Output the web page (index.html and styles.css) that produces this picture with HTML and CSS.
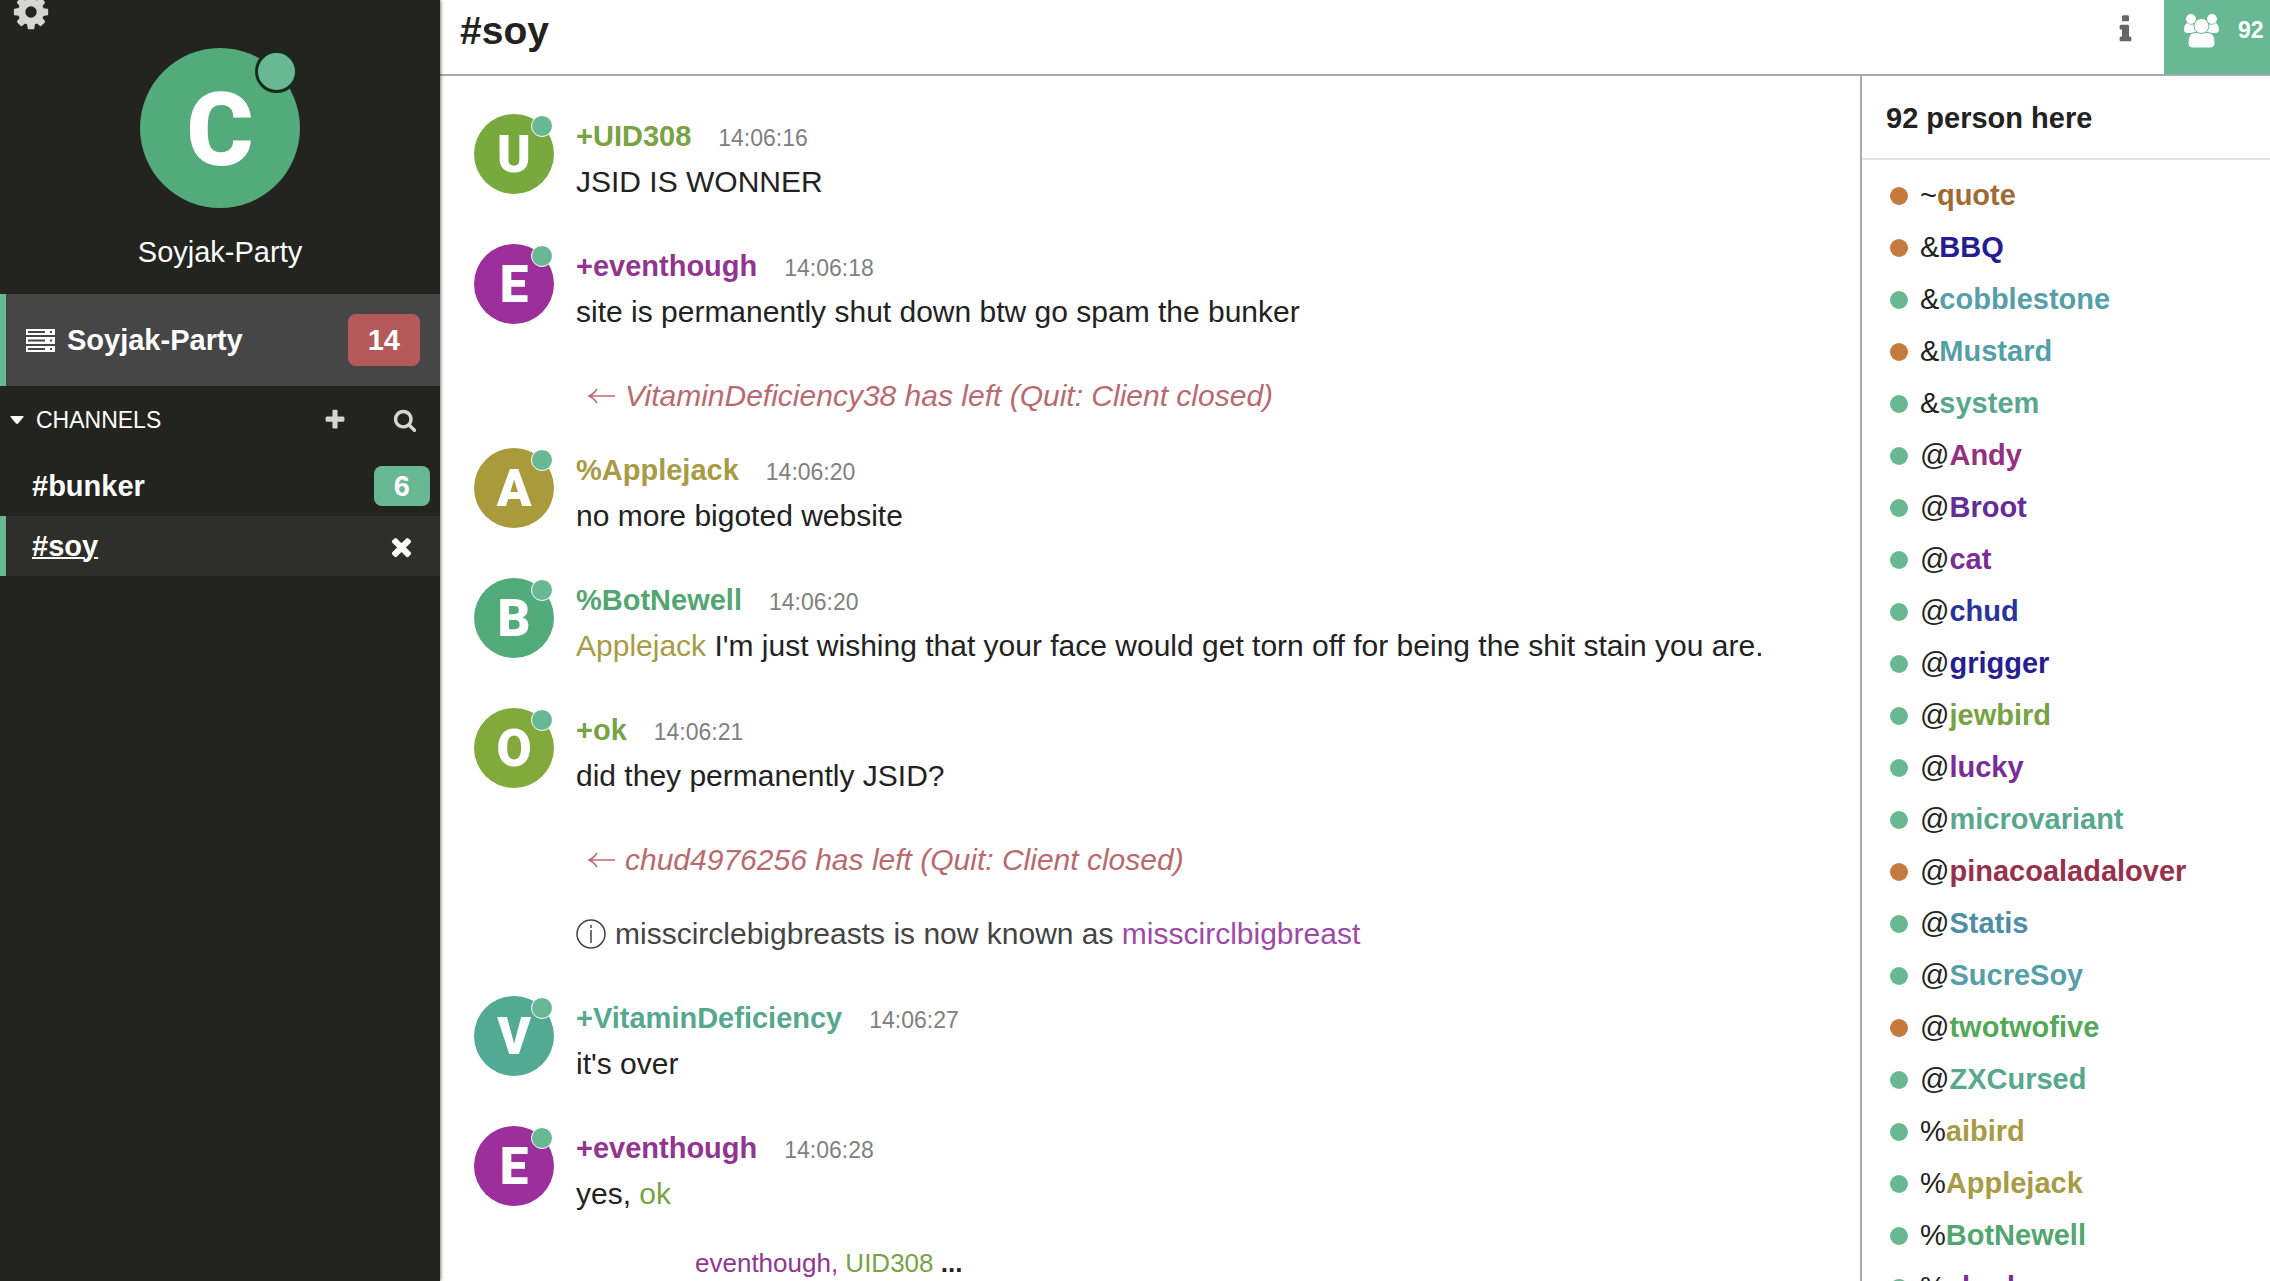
FILE: index.html
```html
<!DOCTYPE html>
<html lang="en">
<head>
	<meta charset="UTF-8">
	<meta name="viewport" content="width=device-width, initial-scale=1">
	<title>#soy - Soyjak-Party</title>
	<link rel="stylesheet" href="styles.css">
</head>
<body>
	<div class="app">
		<nav class="sidebar">
			<button class="settings" aria-label="Settings">
				<svg class="icon-cog" viewBox="0 0 1792 1792"><path d="M1152 896q0-106-75-181t-181-75-181 75-75 181 75 181 181 75 181-75 75-181zm512-109v222q0 12-8 23t-20 13l-185 28q-19 54-39 91 35 50 107 138 10 12 10 25t-9 23q-27 37-99 108t-94 71q-12 0-26-9l-138-108q-44 23-91 38-16 136-29 186-7 28-36 28h-222q-14 0-24.5-8.5t-11.5-21.5l-28-184q-49-16-90-37l-141 107q-10 9-25 9-14 0-25-11-126-114-165-168-7-10-7-23 0-12 8-23 15-21 51-66.5t54-70.5q-27-50-41-99l-183-27q-13-2-21-12.5t-8-23.5v-222q0-12 8-23t19-13l186-28q14-46 39-92-40-57-107-138-10-12-10-24 0-10 9-23 26-36 98.5-107.5t94.5-71.5q13 0 26 10l138 107q44-23 91-38 16-136 29-186 7-28 36-28h222q14 0 24.5 8.5t11.5 21.5l28 184q49 16 90 37l142-107q9-9 24-9 13 0 25 10 129 119 165 170 7 8 7 22 0 12-8 23-15 21-51 66.5t-54 70.5q26 50 41 98l183 28q13 2 21 12.5t8 23.5z"/></svg>
			</button>
			<div class="profile">
				<div class="avatar avatar-large c-green">C<span class="status"></span></div>
				<span class="profile-name">Soyjak-Party</span>
			</div>

			<div class="network">
				<svg class="icon-server" viewBox="0 0 29 23"><path fill-rule="evenodd" d="M0 0h29v6H0zM2 2v2h17V2zM24 2v2h2V2zM0 8h29v7H0zM2 10.500v2h17v-2zM24 10.500v2h2v-2zM0 17h29v6H0zM2 19v2h17v-2zM24 19v2h2v-2z"/></svg>
				<a class="network-name" href="#">Soyjak-Party</a>
				<span class="badge badge-red">14</span>
			</div>

			<div class="channels-head">
				<svg class="icon-caret" viewBox="0 0 14 8"><path d="M1 0h12q1 0 .5 1L8 7.500q-1 .8-2 0L.5 1Q0 0 1 0z"/></svg>
				<span class="channels-title">CHANNELS</span>
				<button class="head-btn" aria-label="Join channel">
					<svg class="icon-small" viewBox="0 0 1792 1792"><path d="M1600 736v192q0 40-28 68t-68 28h-416v416q0 40-28 68t-68 28h-192q-40 0-68-28t-28-68v-416h-416q-40 0-68-28t-28-68v-192q0-40 28-68t68-28h416v-416q0-40 28-68t68-28h192q40 0 68 28t28 68v416h416q40 0 68 28t28 68z"/></svg>
				</button>
				<button class="head-btn" aria-label="Search channels">
					<svg class="icon-small" viewBox="0 0 1792 1792"><path d="M1216 832q0-185-131.5-316.5t-316.5-131.5-316.5 131.5-131.5 316.5 131.5 316.5 316.5 131.5 316.5-131.5 131.5-316.5zm512 832q0 52-38 90t-90 38q-54 0-90-38l-343-342q-179 124-399 124-143 0-273.5-55.5t-225-150-150-225-55.5-273.5 55.5-273.5 150-225 225-150 273.5-55.5 273.5 55.5 225 150 150 225 55.500 273.5q0 220-124 399l343 343q37 37 37 90z"/></svg>
				</button>
			</div>
			<ul class="channels">
				<li class="channel">
					<a href="#">#bunker</a>
					<span class="badge">6</span>
				</li>
				<li class="channel active">
					<a href="#">#soy</a>
					<button class="channel-close" aria-label="Leave channel">
						<svg class="icon-close" viewBox="0 0 1792 1792"><path d="M1490 1322q0 40-28 68l-136 136q-28 28-68 28t-68-28l-294-294-294 294q-28 28-68 28t-68-28l-136-136q-28-28-28-68t28-68l294-294-294-294q-28-28-28-68t28-68l136-136q28-28 68-28t68 28l294 294 294-294q28-28 68-28t68 28l136 136q28 28 28 68t-28 68l-294 294 294 294q28 28 28 68z"/></svg>
					</button>
				</li>
			</ul>
		</nav>

		<div class="container">
			<header class="header">
				<h1 class="header-name">#soy</h1>
				<button class="header-info" aria-label="Channel info">
					<svg class="icon-info" viewBox="0 0 1792 1792"><path d="M1216 1344v128q0 26-19 45t-45 19h-512q-26 0-45-19t-19-45v-128q0-26 19-45t45-19h64v-384h-64q-26 0-45-19t-19-45v-128q0-26 19-45t45-19h384q26 0 45 19t19 45v576h64q26 0 45 19t19 45zm-128-1152v192q0 26-19 45t-45 19h-256q-26 0-45-19t-19-45v-192q0-26 19-45t45-19h256q26 0 45 19t19 45z"/></svg>
				</button>
				<button class="header-users" aria-label="92 users">
					<svg class="icon-users" viewBox="0 0 36 34">
						<circle cx="7" cy="5" r="5"/><circle cx="28" cy="5" r="5"/>
						<path d="M3 9q4 3 8 1-1 6 3 9H4q-4 0-4-3 0-5 3-7zM32 9q-4 3-8 1 1 6-3 9h10q4 0 4-3 0-5-3-7z"/>
						<path class="front" d="M11 18.500h13q7 0 7 10 0 5.500-5 5.500H9.500q-5.500 0-5.500-5.500 0-10 7-10z"/>
						<circle class="front" cx="17.500" cy="12" r="7.500"/>
					</svg>
					<span>92</span>
				</button>
			</header>

			<div class="content">
				<main class="messages">
					<div class="message">
						<div class="avatar c-lime">U<span class="status"></span></div>
						<div class="message-body">
							<div class="message-head"><a class="nick t-lime" href="#">+UID308</a><time>14:06:16</time></div>
							<p>JSID IS WONNER</p>
						</div>
					</div>
					<div class="message">
						<div class="avatar c-purple">E<span class="status"></span></div>
						<div class="message-body">
							<div class="message-head"><a class="nick t-purple" href="#">+eventhough</a><time>14:06:18</time></div>
							<p>site is permanently shut down btw go spam the bunker</p>
						</div>
					</div>
					<p class="notice quit"><svg class="icon-arrow" viewBox="0 0 28 16"><path d="M27 8H2M9 1Q6 6 1 8q5 2 8 7"/></svg>VitaminDeficiency38 has left (Quit: Client closed)</p>
					<div class="message">
						<div class="avatar c-olive">A<span class="status"></span></div>
						<div class="message-body">
							<div class="message-head"><a class="nick t-olive" href="#">%Applejack</a><time>14:06:20</time></div>
							<p>no more bigoted website</p>
						</div>
					</div>
					<div class="message">
						<div class="avatar c-green">B<span class="status"></span></div>
						<div class="message-body">
							<div class="message-head"><a class="nick t-green" href="#">%BotNewell</a><time>14:06:20</time></div>
							<p><a class="t-olive" href="#">Applejack</a> I'm just wishing that your face would get torn off for being the shit stain you are.</p>
						</div>
					</div>
					<div class="message">
						<div class="avatar c-lime2">O<span class="status"></span></div>
						<div class="message-body">
							<div class="message-head"><a class="nick t-lime" href="#">+ok</a><time>14:06:21</time></div>
							<p>did they permanently JSID?</p>
						</div>
					</div>
					<p class="notice quit"><svg class="icon-arrow" viewBox="0 0 28 16"><path d="M27 8H2M9 1Q6 6 1 8q5 2 8 7"/></svg>chud4976256 has left (Quit: Client closed)</p>
					<p class="notice rename"><svg class="icon-circle-i" viewBox="0 0 30 30"><circle cx="15" cy="15" r="14"/><path d="M15 11v13M15 6v3"/></svg>misscirclebigbreasts is now known as <a class="t-violet" href="#">misscirclbigbreast</a></p>
					<div class="message">
						<div class="avatar c-teal">V<span class="status"></span></div>
						<div class="message-body">
							<div class="message-head"><a class="nick t-teal" href="#">+VitaminDeficiency</a><time>14:06:27</time></div>
							<p>it's over</p>
						</div>
					</div>
					<div class="message message-last">
						<div class="avatar c-purple">E<span class="status"></span></div>
						<div class="message-body">
							<div class="message-head"><a class="nick t-purple" href="#">+eventhough</a><time>14:06:28</time></div>
							<p>yes, <a class="t-lime" href="#">ok</a></p>
						</div>
					</div>
					<p class="typing"><span class="t-purple">eventhough, </span><span class="t-lime">UID308</span> <b>...</b></p>
				</main>

				<aside class="nicklist">
					<h2 class="nicklist-head">92 person here</h2>
					<ul class="users">
						<li class="user away"><span>~<a class="t-brown" href="#">quote</a></span></li>
						<li class="user away"><span>&amp;<a class="t-navy" href="#">BBQ</a></span></li>
						<li class="user"><span>&amp;<a class="t-cyan" href="#">cobblestone</a></span></li>
						<li class="user away"><span>&amp;<a class="t-cyan" href="#">Mustard</a></span></li>
						<li class="user"><span>&amp;<a class="t-teal" href="#">system</a></span></li>
						<li class="user"><span>@<a class="t-magenta" href="#">Andy</a></span></li>
						<li class="user"><span>@<a class="t-indigo" href="#">Broot</a></span></li>
						<li class="user"><span>@<a class="t-grape" href="#">cat</a></span></li>
						<li class="user"><span>@<a class="t-blue" href="#">chud</a></span></li>
						<li class="user"><span>@<a class="t-navy" href="#">grigger</a></span></li>
						<li class="user"><span>@<a class="t-lime" href="#">jewbird</a></span></li>
						<li class="user"><span>@<a class="t-grape" href="#">lucky</a></span></li>
						<li class="user"><span>@<a class="t-teal" href="#">microvariant</a></span></li>
						<li class="user away"><span>@<a class="t-crimson" href="#">pinacoaladalover</a></span></li>
						<li class="user"><span>@<a class="t-steel" href="#">Statis</a></span></li>
						<li class="user"><span>@<a class="t-cyan" href="#">SucreSoy</a></span></li>
						<li class="user away"><span>@<a class="t-leaf" href="#">twotwofive</a></span></li>
						<li class="user"><span>@<a class="t-teal" href="#">ZXCursed</a></span></li>
						<li class="user"><span>%<a class="t-olive" href="#">aibird</a></span></li>
						<li class="user"><span>%<a class="t-olive" href="#">Applejack</a></span></li>
						<li class="user"><span>%<a class="t-green" href="#">BotNewell</a></span></li>
						<li class="user"><span>%<a class="t-grape" href="#">chuds</a></span></li>
					</ul>
				</aside>
			</div>
		</div>
	</div>
</body>
</html>
```
FILE: styles.css
```css
*{box-sizing:border-box;}
body{margin:0;font-family:"Liberation Sans",Arial,sans-serif;font-size:29px;color:#222;background:#fff;}
h1,h2,p,ul{margin:0;padding:0;}
ul{list-style:none;}
a{color:inherit;text-decoration:none;}
button{padding:0;border:0;background:none;font:inherit;color:inherit;cursor:pointer;}
svg{display:block;fill:currentColor;flex:none;}

.app{display:flex;height:100vh;overflow:hidden;}

/* sidebar */
.sidebar{position:relative;flex:none;width:440px;background:#23231f;color:#fff;box-shadow:0 0 4px rgba(0,0,0,.8);z-index:1;}
.settings{position:absolute;top:-8px;left:11px;color:#d5d5d5;}
.icon-cog{width:40px;height:40px;}
.profile{display:flex;flex-direction:column;align-items:center;gap:26px;height:294px;padding-top:48px;}
.profile-name{line-height:36px;}

.avatar{position:relative;flex:none;width:80px;height:80px;border-radius:50%;color:#fff;font:900 51px/82px Roboto,"Liberation Sans",sans-serif;text-align:center;}
.avatar .status{position:absolute;top:1px;right:1px;width:22px;height:22px;border:1px solid #fff;border-radius:50%;background:#68b894;}
.avatar-large{width:160px;height:160px;font-size:102px;line-height:164px;}
.avatar-large .status{top:2px;right:2px;width:43px;height:43px;border:3px solid #152c1c;}

.network{display:flex;align-items:center;gap:12px;height:92px;padding:0 20px;border-left:6px solid #68b894;background:#464646;font-weight:bold;}
.icon-server{width:29px;height:23px;}
.network-name{flex:1;}
.badge{padding:0 20px;border-radius:8px;background:#68b894;font-weight:bold;line-height:40px;}
.badge-red{background:#b35959;line-height:52px;}

.channels-head{display:flex;align-items:center;height:70px;padding:0 23px 2px 10px;font-size:23px;color:#fff;}
.icon-caret{width:14px;height:8px;}
.channels-title{flex:1;padding-left:12px;}
.head-btn{margin-left:46px;color:#d5d5d5;}
.icon-small{width:24px;height:24px;}
.channel{display:flex;align-items:center;justify-content:space-between;height:60px;padding:0 10px 0 26px;border-left:6px solid transparent;font-weight:bold;}
.channel.active{border-color:#68b894;background:#2e2e2a;}
.channel.active a{text-decoration:underline;text-decoration-thickness:2px;}
.channel-close{margin-right:14px;}
.icon-close{width:29px;height:29px;}

/* header */
.container{flex:1;display:flex;flex-direction:column;min-width:0;}
.header{display:flex;flex:none;height:76px;border-bottom:2px solid #aaa;}
.header-name{flex:1;padding-left:20px;font-size:39px;line-height:62px;}
.header-info{padding:0 22px 16px;color:#666;}
.icon-info{width:33px;height:33px;}
.header-users{display:flex;gap:18px;width:106px;padding:14px 0 0 20px;background:#68b894;color:#fff;font-size:23px;font-weight:bold;line-height:32px;}
.icon-users{width:36px;height:34px;}
.icon-users .front{stroke:#68b894;}

/* messages */
.content{flex:1;display:flex;min-height:0;}
.messages{flex:1;min-width:0;padding:38px 34px 0;overflow:hidden;}
.message{display:flex;gap:22px;height:130px;font-size:30px;}
.message-last{height:122px;}
.message-body{flex:1;line-height:44px;}
.message-head{display:flex;align-items:baseline;gap:27px;line-height:44px;}
.nick{font-size:29px;font-weight:bold;}
time{font-size:23px;color:#808080;}
.notice{display:flex;align-items:center;height:74px;padding:0 0 30px 102px;font-size:30px;white-space:pre;}
.quit{padding-left:114px;color:#b96a70;font-style:italic;}
.icon-arrow{width:28px;height:16px;margin-right:9px;fill:none;stroke:currentColor;stroke-width:1.5;}
.rename{margin-bottom:10px;color:#444;}
.icon-circle-i{width:30px;height:30px;margin-right:9px;fill:none;stroke:currentColor;stroke-width:1.5;}
.typing{padding-left:221px;font-size:26px;line-height:30px;}

/* nicklist */
.nicklist{flex:none;width:410px;border-left:2px solid #aaa;overflow:hidden;}
.nicklist-head{height:84px;padding-left:24px;border-bottom:2px solid #e2e2e2;font-size:29px;line-height:84px;}
.users{padding-top:10px;}
.user{display:flex;align-items:center;gap:12px;height:52px;padding-left:28px;}
.user::before{content:"";width:18px;height:18px;border-radius:50%;background:#68b894;}
.user.away::before{background:#c47a3d;}
.user span{padding-bottom:2px;}
.user a{font-weight:bold;}

/* nick colours */
.c-green{background:#53aa7a;}
.c-lime{background:#78a93c;}
.c-lime2{background:#81a93c;}
.c-purple{background:#9c2f9c;}
.c-olive{background:#a99a3c;}
.c-teal{background:#53aa94;}
.t-green{color:#53a670;}
.t-lime{color:#78a344;}
.t-purple{color:#91358f;}
.t-olive{color:#a79b45;}
.t-teal{color:#58a78f;}
.t-violet{color:#9b4aa8;}
.t-brown{color:#a06a35;}
.t-navy{color:#261e90;}
.t-cyan{color:#559fa8;}
.t-magenta{color:#95307f;}
.t-indigo{color:#642c95;}
.t-grape{color:#7a2c97;}
.t-blue{color:#29339a;}
.t-crimson{color:#98304d;}
.t-steel{color:#4d8da6;}
.t-leaf{color:#53a856;}
```
